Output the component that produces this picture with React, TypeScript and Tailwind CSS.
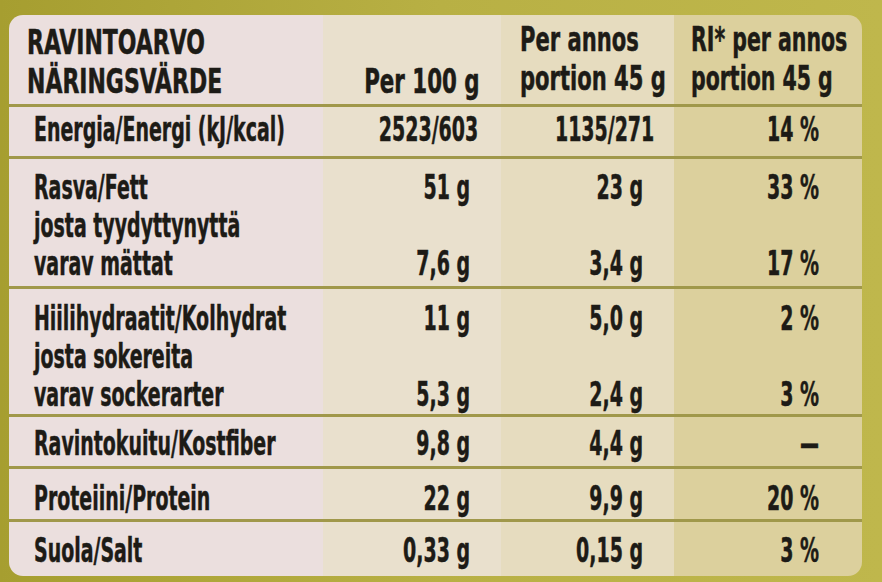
import React from "react";

type Row = {
  h: string;
  pt: string;
  label: string[];
  a: string[];
  b: string[];
  c: string[];
  last?: boolean;
};

const rows: Row[] = [
  {
    h: "h-[52px]",
    pt: "pt-[3px]",
    label: ["Energia/Energi (kJ/kcal)"],
    a: ["2523/603"],
    b: ["1135/271"],
    c: ["14 %"],
  },
  {
    h: "h-[130px]",
    pt: "pt-[9px]",
    label: ["Rasva/Fett", "josta tyydyttynyttä", "varav mättat"],
    a: ["51 g", "", "7,6 g"],
    b: ["23 g", "", "3,4 g"],
    c: ["33 %", "", "17 %"],
  },
  {
    h: "h-[128px]",
    pt: "pt-[10px]",
    label: ["Hiilihydraatit/Kolhydrat", "josta sokereita", "varav sockerarter"],
    a: ["11 g", "", "5,3 g"],
    b: ["5,0 g", "", "2,4 g"],
    c: ["2 %", "", "3 %"],
  },
  {
    h: "h-[52px]",
    pt: "pt-[7px]",
    label: ["Ravintokuitu/Kostfiber"],
    a: ["9,8 g"],
    b: ["4,4 g"],
    c: ["—"],
  },
  {
    h: "h-[53px]",
    pt: "pt-[10px]",
    label: ["Proteiini/Protein"],
    a: ["22 g"],
    b: ["9,9 g"],
    c: ["20 %"],
  },
  {
    h: "h-[54px]",
    pt: "pt-[9px]",
    label: ["Suola/Salt"],
    a: ["0,33 g"],
    b: ["0,15 g"],
    c: ["3 %"],
    last: true,
  },
];

// condensed lines; right-aligned columns shrink toward their right edge
const Lines = ({ lines, right }: { lines: string[]; right?: boolean }) => (
  <div
    className={`scale-x-[0.62] leading-[38px] ${
      right ? "origin-right text-right" : "origin-left text-left"
    }`}
  >
    {lines.map((l, i) => (
      <div key={i} className="whitespace-nowrap">
        {l || "\u00a0"}
      </div>
    ))}
  </div>
);

export default function App() {
  return (
    <div className="w-[882px] h-[582px] overflow-hidden bg-linear-to-r from-[#a69e30] via-[#b8b044] to-[#bfb74c] pl-[9px] pt-[15px] font-['Liberation_Sans_Narrow','DejaVu_Sans_Condensed','Liberation_Sans',sans-serif] font-bold text-[34px] text-[#1d1b16] [-webkit-text-stroke:0.5px_#1d1b16]">
      <div className="w-[853px] h-[561px] rounded-[14px] overflow-hidden flex flex-col">
        {/* Header */}
        <div className="h-[92px] grid grid-cols-[314px_178px_173px_188px] border-b-[3px] border-[#a0984a]">
          <div className="bg-[#ebdfde] pt-[8px] pl-[18px] text-[33px]">
            <div className="origin-left scale-x-[0.74] leading-[39px] whitespace-nowrap">
              <div>RAVINTOARVO</div>
              <div>NÄRINGSVÄRDE</div>
            </div>
          </div>
          <div className="bg-[#e9e0cd] pt-[8px] pr-[31px] text-[33px]">
            <div className="origin-right scale-x-[0.72] leading-[39px] text-right whitespace-nowrap">
              <div>{"\u00a0"}</div>
              <div>Per 100 g</div>
            </div>
          </div>
          <div className="bg-[#e6dcbf] pt-[5px] pl-[19px] text-[33px]">
            <div className="origin-left scale-x-[0.71] leading-[39px] whitespace-nowrap">
              <div>Per annos</div>
              <div>portion 45 g</div>
            </div>
          </div>
          <div className="bg-[#dcd09d] pt-[5px] pl-[17px] text-[33px]">
            <div className="origin-left scale-x-[0.69] leading-[39px] whitespace-nowrap">
              <div>RI* per annos</div>
              <div>portion 45 g</div>
            </div>
          </div>
        </div>

        {rows.map((r, i) => (
          <div
            key={i}
            className={`${r.h} grid grid-cols-[314px_178px_173px_188px] ${
              r.last ? "" : "border-b-[3px] border-[#a0984a]"
            }`}
          >
            <div className={`bg-[#ebdfde] pl-[25px] ${r.pt}`}>
              <Lines lines={r.label} />
            </div>
            <div className={`bg-[#e9e0cd] pr-[31px] ${r.pt}`}>
              <Lines lines={r.a} right />
            </div>
            <div className={`bg-[#e6dcbf] pr-[31px] ${r.pt}`}>
              <Lines lines={r.b} right />
            </div>
            <div className={`bg-[#dcd09d] pr-[43px] ${r.pt}`}>
              <Lines lines={r.c} right />
            </div>
          </div>
        ))}
      </div>
    </div>
  );
}
